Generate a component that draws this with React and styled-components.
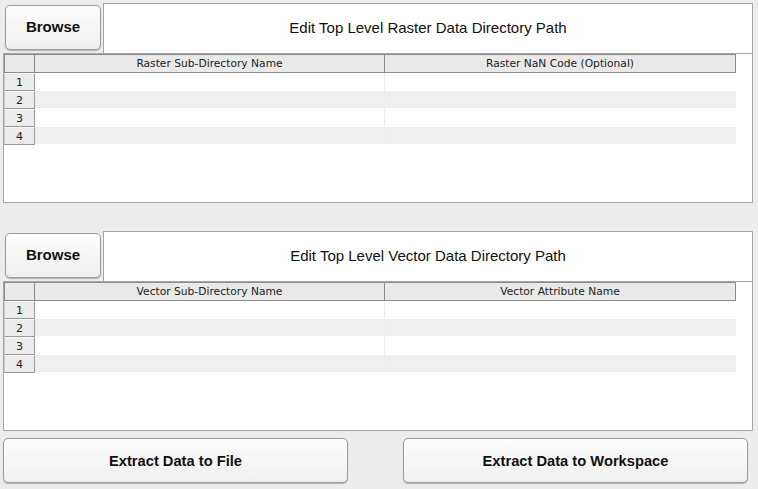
import styled, { createGlobalStyle } from "styled-components";

const GlobalStyle = createGlobalStyle`
  html, body {
    margin: 0;
    padding: 0;
    background: #ececec;
  }
  * {
    box-sizing: border-box;
  }
`;

const sections = [
  {
    title: "Edit Top Level Raster Data Directory Path",
    cols: ["Raster Sub-Directory Name", "Raster NaN Code (Optional)"],
  },
  {
    title: "Edit Top Level Vector Data Directory Path",
    cols: ["Vector Sub-Directory Name", "Vector Attribute Name"],
  },
];

function App() {
  return (
    <Wrap>
      <GlobalStyle />
      {sections.map((s, i) => (
        <Section key={i} first={i === 0}>
          <TopRow>
            <BrowseButton>Browse</BrowseButton>
            <PathField>{s.title}</PathField>
          </TopRow>
          <TablePanel>
            <Grid>
              <Corner />
              <HeadCell>{s.cols[0]}</HeadCell>
              <HeadCell last>{s.cols[1]}</HeadCell>
              {[1, 2, 3, 4].map((n) => (
                <Row key={n}>
                  <RowNum>{n}</RowNum>
                  <Cell odd={n % 2 === 0} />
                  <Cell odd={n % 2 === 0} last />
                </Row>
              ))}
            </Grid>
          </TablePanel>
        </Section>
      ))}
      <Footer>
        <BigButton>Extract Data to File</BigButton>
        <BigButton>Extract Data to Workspace</BigButton>
      </Footer>
    </Wrap>
  );
}

const Wrap = styled.div`
  width: 758px;
  height: 489px;
  padding: 3px 5px 0 3px;
  display: flex;
  flex-direction: column;
  font-family: "DejaVu Sans", "Liberation Sans", sans-serif;
  color: #1a1a1a;
`;

const Section = styled.div`
  display: flex;
  flex-direction: column;
  margin-top: ${(p) => (p.first ? "0" : "28px")};
`;

const TopRow = styled.div`
  display: flex;
  align-items: flex-start;
  height: 50px;
`;

const buttonLook = `
  background: linear-gradient(#fdfdfd, #efefef);
  border: 1px solid #9c9c9c;
  border-radius: 5px;
  box-shadow: 0 1px 1px rgba(0, 0, 0, 0.25);
  font-family: "Liberation Sans", Arial, sans-serif;
  font-weight: bold;
  color: #111;
  display: flex;
  align-items: center;
  justify-content: center;
  padding: 0;
`;

const BrowseButton = styled.button`
  ${buttonLook}
  width: 96px;
  height: 45px;
  margin: 2px 2px 0 2px;
  padding-bottom: 2px;
  font-size: 15px;
`;

const PathField = styled.div`
  flex: 1;
  height: 50px;
  background: #fff;
  border: 1px solid #a6a6a6;
  border-bottom: none;
  display: flex;
  align-items: center;
  justify-content: center;
  padding-bottom: 2px;
  font-family: "Liberation Sans", Arial, sans-serif;
  font-size: 15px;
  color: #111;
`;

const TablePanel = styled.div`
  height: 150px;
  background: #fff;
  border: 1px solid #a6a6a6;
`;

const Grid = styled.div`
  display: grid;
  grid-template-columns: 31px 350px 351px;
  grid-auto-rows: 18px;
`;

const Row = styled.div`
  display: contents;
`;

const Corner = styled.div`
  background: #e9e9e9;
  border: 1px solid #8c8c8c;
  height: 19px;
`;

const HeadCell = styled.div`
  background: #e9e9e9;
  border-top: 1px solid #8c8c8c;
  border-bottom: 1px solid #8c8c8c;
  border-right: 1px solid #8c8c8c;
  height: 19px;
  font-size: 10.7px;
  color: #222;
  display: flex;
  align-items: center;
  justify-content: center;
`;

const RowNum = styled.div`
  background: #ececec;
  border: 1px solid #9a9a9a;
  border-top-color: #f8f8f8;
  border-left-color: #c8c8c8;
  font-size: 11px;
  color: #222;
  display: flex;
  align-items: center;
  justify-content: center;
  margin-top: 1px;
  height: 18px;
`;

const Cell = styled.div`
  background: ${(p) => (p.odd ? "#efefef" : "#fff")};
  border-right: ${(p) => (p.last ? "none" : "1px solid #ececec")};
  margin-top: 1px;
`;

const Footer = styled.div`
  display: flex;
  justify-content: space-between;
  padding-right: 5px;
  margin-top: 7px;
`;

const BigButton = styled.button`
  ${buttonLook}
  width: 345px;
  height: 45px;
  font-size: 14.7px;
`;

export default App;
